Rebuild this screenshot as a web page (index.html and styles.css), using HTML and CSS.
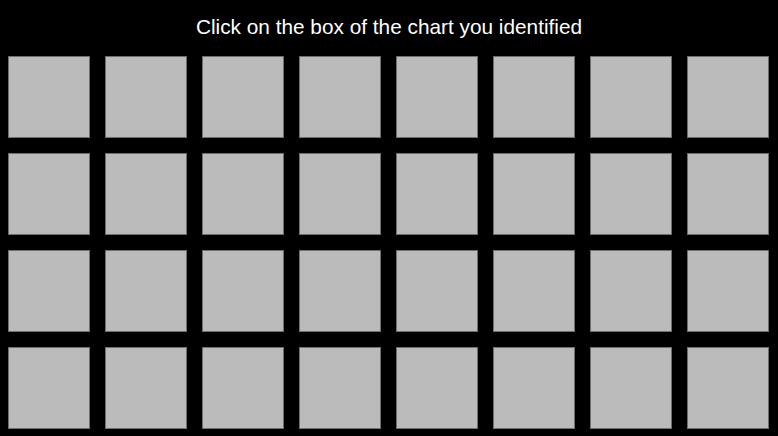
FILE: index.html
```html
<!DOCTYPE html>
<html>
<head>
<meta charset="utf-8">
<link rel="stylesheet" href="styles.css">
</head>
<body>
<div class="page">
  <h1 class="title">Click on the box of the chart you identified</h1>
  <div class="grid">
    <div class="box"></div><div class="box"></div><div class="box"></div><div class="box"></div>
    <div class="box"></div><div class="box"></div><div class="box"></div><div class="box"></div>
    <div class="box"></div><div class="box"></div><div class="box"></div><div class="box"></div>
    <div class="box"></div><div class="box"></div><div class="box"></div><div class="box"></div>
    <div class="box"></div><div class="box"></div><div class="box"></div><div class="box"></div>
    <div class="box"></div><div class="box"></div><div class="box"></div><div class="box"></div>
    <div class="box"></div><div class="box"></div><div class="box"></div><div class="box"></div>
    <div class="box"></div><div class="box"></div><div class="box"></div><div class="box"></div>
  </div>
</div>
</body>
</html>
```

FILE: styles.css
```css
html, body {
  margin: 0;
  padding: 0;
  background: #000;
}
.page {
  width: 778px;
  height: 436px;
  overflow: hidden;
  background: #000;
}
.title {
  margin: 0;
  padding-top: 15px;
  height: 40px;
  box-sizing: border-box;
  font-family: "Liberation Sans", Arial, sans-serif;
  font-weight: normal;
  font-size: 20.8px;
  line-height: 24px;
  color: #fff;
  text-align: center;
}
.grid {
  display: grid;
  grid-template-columns: repeat(8, 82px);
  grid-auto-rows: 82px;
  column-gap: 15px;
  row-gap: 15px;
  padding: 16px 0 0 8px;
}
.box {
  background: #bbbbbb;
  border: 1px solid #6e6e6e;
  box-sizing: border-box;
}
```
